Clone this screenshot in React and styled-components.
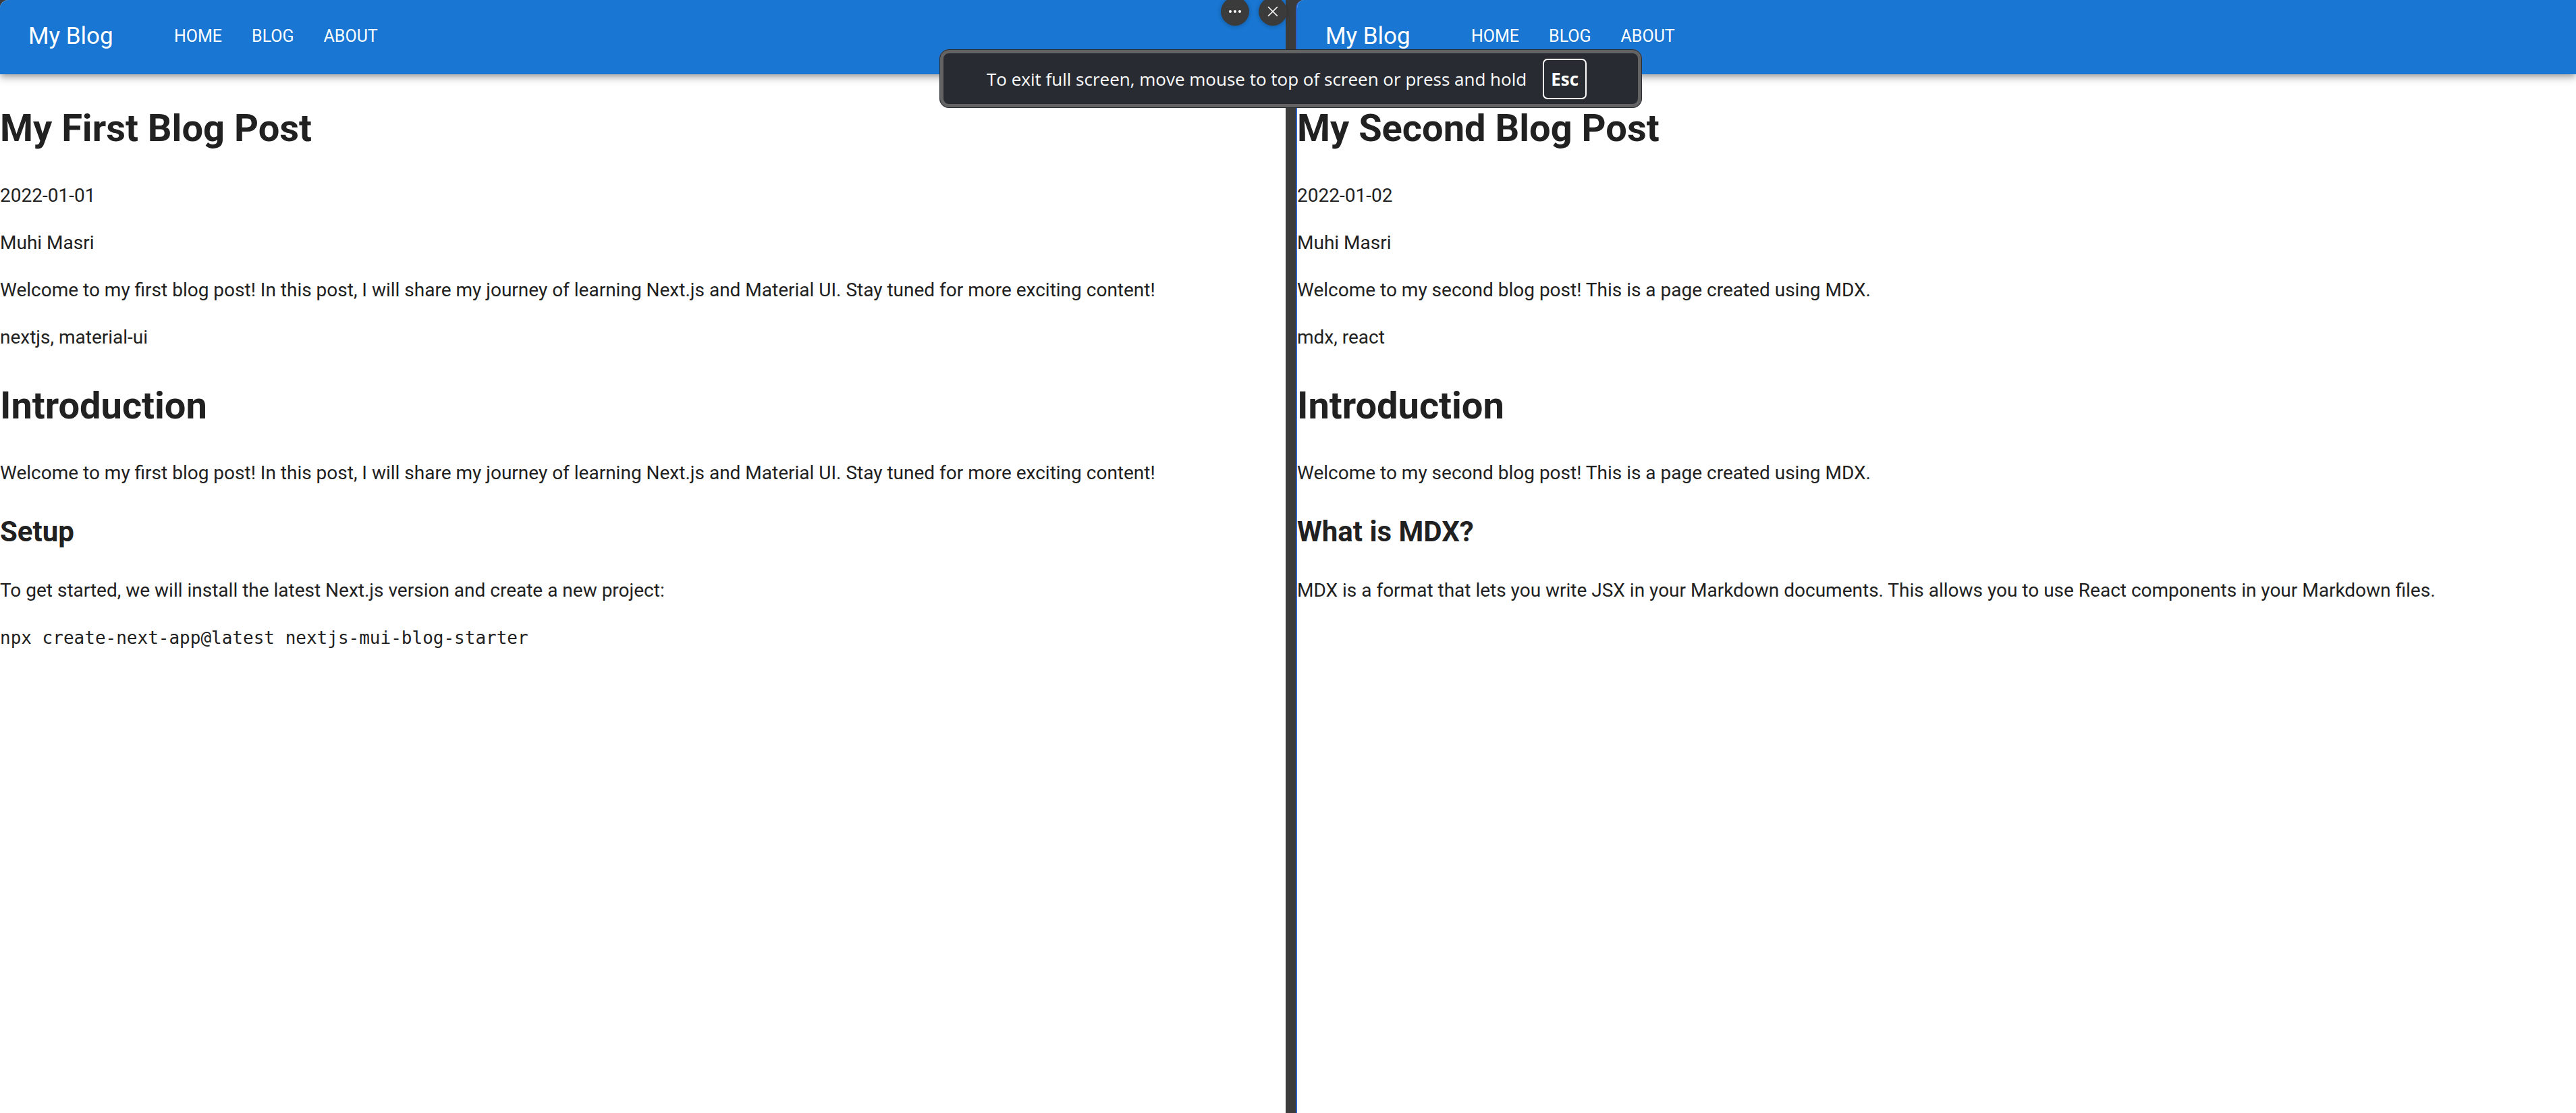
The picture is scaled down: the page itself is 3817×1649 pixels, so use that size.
import React from "react";
import styled, { createGlobalStyle } from "styled-components";

const Global = createGlobalStyle`
  * { box-sizing: border-box; }
  body {
    margin: 0;
    background: #3b3b3b;
    color: #212121;
    font-family: Roboto, "Liberation Sans", sans-serif;
  }
`;

const Screen = styled.div`
  position: relative;
  display: grid;
  grid-template-columns: 1905fr 1897fr;
  column-gap: 15px;
  min-height: 100vh;
  background: #3b3b3b;
`;

const Pane = styled.main`
  min-width: 0;
  overflow: hidden;
  background: #fff;
  border-top-left-radius: 12px;
  border-left: ${(p) => (p.$active ? "2px solid #2f5fc9" : "0")};
`;

const Bar = styled.header`
  display: flex;
  align-items: center;
  height: 110px;
  padding: 0 42px 2px;
  background: #1976d2;
  color: #fff;
  box-shadow:
    0 4px 7px -2px rgba(0, 0, 0, 0.2),
    0 7px 9px rgba(0, 0, 0, 0.14),
    0 2px 18px rgba(0, 0, 0, 0.12);
`;

const Brand = styled.a`
  min-width: 198px;
  color: inherit;
  font-size: 35px;
  line-height: 56px;
  text-decoration: none;
`;

const Nav = styled.nav`
  display: flex;
  gap: 8px;
`;

const NavLink = styled.a`
  padding: 10px 18px;
  color: inherit;
  font-size: 25px;
  line-height: 42px;
  text-decoration: none;
  text-transform: uppercase;
`;

const Title = styled.h1`
  margin: 38px 0 37px;
  font-size: 56px;
  line-height: 84px;
  font-weight: 700;
`;

const Subtitle = styled.h2`
  margin: 35px 0;
  font-size: 42px;
  line-height: 62px;
  font-weight: 700;
`;

const Text = styled.p`
  margin: 28px 0;
  font-size: 28px;
  line-height: 42px;
`;

const Code = styled.code`
  font-family: "DejaVu Sans Mono", monospace;
  font-size: 26px;
`;

const WindowControls = styled.div`
  position: absolute;
  top: -4px;
  left: 1809px;
  display: flex;
  gap: 14px;
`;

const RoundButton = styled.button`
  display: grid;
  place-items: center;
  width: 42px;
  height: 42px;
  padding: 0;
  border: 0;
  border-radius: 50%;
  background: #3b3b3b;
  color: #fff;
  box-shadow: 0 1px 6px rgba(0, 0, 0, 0.25);
`;

const Toast = styled.div`
  position: absolute;
  top: 73px;
  left: 1392px;
  display: flex;
  align-items: center;
  justify-content: space-between;
  width: 1041px;
  height: 87px;
  padding: 0 76px 0 64px;
  border: 6px solid #636363;
  border-radius: 14px;
  outline: 1px solid #2a2c33;
  outline-offset: -1px;
  background: #292b33;
  color: #fff;
  font-family: "Open Sans", sans-serif;
  font-size: 26px;
  line-height: 36px;
`;

const Key = styled.kbd`
  padding: 10px;
  border: 2px solid #fff;
  border-radius: 7px;
  font-family: inherit;
  font-size: 26px;
  font-weight: 700;
`;

const posts = [
  {
    title: "My First Blog Post",
    date: "2022-01-01",
    summary:
      "Welcome to my first blog post! In this post, I will share my journey of learning Next.js and Material UI. Stay tuned for more exciting content!",
    tags: "nextjs, material-ui",
    heading: "Setup",
    body: "To get started, we will install the latest Next.js version and create a new project:",
    code: "npx create-next-app@latest nextjs-mui-blog-starter",
  },
  {
    title: "My Second Blog Post",
    date: "2022-01-02",
    summary: "Welcome to my second blog post! This is a page created using MDX.",
    tags: "mdx, react",
    heading: "What is MDX?",
    body: "MDX is a format that lets you write JSX in your Markdown documents. This allows you to use React components in your Markdown files.",
  },
];

function BlogPane({ post, active }) {
  return (
    <Pane $active={active}>
      <Bar>
        <Brand href="#">My Blog</Brand>
        <Nav>
          <NavLink href="#home">Home</NavLink>
          <NavLink href="#blog">Blog</NavLink>
          <NavLink href="#about">About</NavLink>
        </Nav>
      </Bar>
      <article>
        <Title>{post.title}</Title>
        <Text>{post.date}</Text>
        <Text>Muhi Masri</Text>
        <Text>{post.summary}</Text>
        <Text>{post.tags}</Text>
        <Title>Introduction</Title>
        <Text>{post.summary}</Text>
        <Subtitle>{post.heading}</Subtitle>
        <Text>{post.body}</Text>
        {post.code && (
          <Text>
            <Code>{post.code}</Code>
          </Text>
        )}
      </article>
    </Pane>
  );
}

export default function App() {
  return (
    <>
      <Global />
      <Screen>
        {posts.map((post, i) => (
          <BlogPane key={post.title} post={post} active={i === 1} />
        ))}
        <WindowControls>
          <RoundButton type="button" aria-label="More options">
            <svg width="20" height="20" viewBox="0 0 20 20" fill="currentColor">
              <circle cx="3" cy="10" r="2" />
              <circle cx="10" cy="10" r="2" />
              <circle cx="17" cy="10" r="2" />
            </svg>
          </RoundButton>
          <RoundButton type="button" aria-label="Close">
            <svg width="20" height="20" viewBox="0 0 20 20" fill="none" stroke="currentColor" strokeWidth="1.6" strokeLinecap="round">
              <path d="M3.5 3.5 16.5 16.5M16.5 3.5 3.5 16.5" />
            </svg>
          </RoundButton>
        </WindowControls>
        <Toast role="status">
          <span>To exit full screen, move mouse to top of screen or press and hold</span>
          <Key>Esc</Key>
        </Toast>
      </Screen>
    </>
  );
}
